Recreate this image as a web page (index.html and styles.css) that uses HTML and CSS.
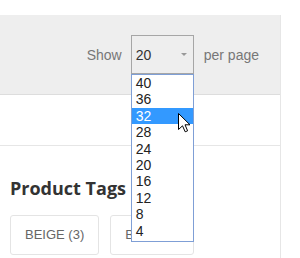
FILE: index.html
```html
<!DOCTYPE html>
<html>
<head>
<meta charset="utf-8">
<link rel="stylesheet" href="styles.css">
</head>
<body>
<div class="page">
  <div class="toolbar">
    <span class="label">Show</span>
    <div class="select-wrap">
      <div class="select"><span>20</span><span class="arrow"></span></div>
      <ul class="dropdown">
        <li>40</li>
        <li>36</li>
        <li class="active">32</li>
        <li>28</li>
        <li>24</li>
        <li>20</li>
        <li>16</li>
        <li>12</li>
        <li>8</li>
        <li>4</li>
      </ul>
      <svg class="cursor" width="13" height="20" viewBox="0 0 13 20"><path d="M0.5 0.5 L0.5 16.5 L4.5 12.8 L7.2 18.8 L9.6 17.8 L7 11.8 L12 11.8 Z" fill="#fff" stroke="#000" stroke-width="1" stroke-linejoin="miter"/></svg>
    </div>
    <span class="label">per page</span>
  </div>
  <div class="spacer"></div>
  <div class="sidebar">
    <h3 class="title">Product Tags</h3>
    <div class="tags">
      <a class="tag">BEIGE (3)</a>
      <a class="tag">BLUE (1)</a>
    </div>
  </div>
</div>
</body>
</html>
```
FILE: styles.css
```css
html, body {
  margin: 0;
  padding: 0;
  background: #fff;
  font-family: "Liberation Sans", Arial, sans-serif;
}
.page {
  width: 280px;
  margin-top: 15px;
  border-right: 1px solid #e6e6e6;
  height: 243px;
}
.toolbar {
  height: 80px;
  background: #eeeeee;
  border-bottom: 1px solid #dddddd;
  display: flex;
  justify-content: flex-end;
  align-items: center;
  padding-right: 21px;
  box-sizing: border-box;
}
.label {
  font-size: 14px;
  color: #777;
}
.select-wrap {
  position: relative;
  margin: 0 10px 0 9px;
}
.select {
  width: 63px;
  height: 39px;
  box-sizing: border-box;
  border: 1px solid #a6a6a6;
  display: flex;
  align-items: center;
  justify-content: space-between;
  padding: 0 5px 0 4px;
  font-size: 14px;
  color: #333;
}
.arrow {
  width: 0;
  height: 0;
  border-left: 3px solid transparent;
  border-right: 3px solid transparent;
  border-top: 3px solid #999;
  margin-right: 1px;
}
.dropdown {
  position: absolute;
  left: 0;
  top: 39px;
  width: 63px;
  box-sizing: border-box;
  margin: 0;
  padding: 0 0 2px 0;
  list-style: none;
  background: #fff;
  border: 1px solid #7f9fd6;
  z-index: 5;
}
.dropdown li {
  height: 16.4px;
  line-height: 16.4px;
  font-size: 14px;
  color: #222;
  padding-left: 4px;
}
.dropdown li.active {
  background: #3399ff;
  color: #fff;
}
.cursor {
  position: absolute;
  left: 47px;
  top: 78px;
  z-index: 6;
}
.spacer {
  height: 50px;
  border-bottom: 1px solid #e6e6e6;
}
.sidebar {
  padding: 31px 0 0 10px;
}
.title {
  margin: 0;
  font-family: "Open Sans", sans-serif;
  font-weight: 700;
  font-size: 18px;
  line-height: 22px;
  color: #333;
}
.tags {
  display: flex;
  gap: 11px;
  margin-top: 16px;
}
.tag {
  display: block;
  height: 40px;
  box-sizing: border-box;
  line-height: 38px;
  padding: 0 14px;
  border: 1px solid #e4e4e4;
  border-radius: 3px;
  font-size: 13px;
  color: #666;
}
```
